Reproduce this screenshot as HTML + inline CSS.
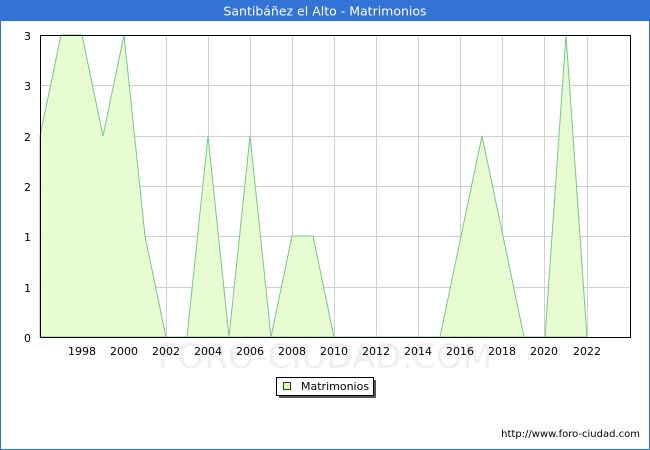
<!DOCTYPE html>
<html><head><meta charset="utf-8"><style>
body{margin:0;width:650px;height:450px;overflow:hidden;background:#fff;font-family:"DejaVu Sans","Liberation Sans",sans-serif;}
</style></head><body>
<svg width="650" height="450" xmlns="http://www.w3.org/2000/svg" style="display:block">
<rect x="0.5" y="0.5" width="649" height="449" fill="#fff" stroke="#3373d6"/>
<rect x="0" y="0" width="650" height="21" fill="#3373d6"/>
<text x="325" y="15.5" text-anchor="middle" fill="#fff" font-size="12.5" font-family="DejaVu Sans, sans-serif">Santibáñez el Alto - Matrimonios</text>
<g stroke="#d0d0d0" stroke-width="1">
<line x1="40" y1="85.5" x2="630" y2="85.5"/><line x1="40" y1="136.5" x2="630" y2="136.5"/><line x1="40" y1="186.5" x2="630" y2="186.5"/><line x1="40" y1="236.5" x2="630" y2="236.5"/><line x1="40" y1="287.5" x2="630" y2="287.5"/>
<line x1="82.5" y1="35" x2="82.5" y2="337"/><line x1="124.5" y1="35" x2="124.5" y2="337"/><line x1="166.5" y1="35" x2="166.5" y2="337"/><line x1="208.5" y1="35" x2="208.5" y2="337"/><line x1="250.5" y1="35" x2="250.5" y2="337"/><line x1="292.5" y1="35" x2="292.5" y2="337"/><line x1="334.5" y1="35" x2="334.5" y2="337"/><line x1="376.5" y1="35" x2="376.5" y2="337"/><line x1="418.5" y1="35" x2="418.5" y2="337"/><line x1="460.5" y1="35" x2="460.5" y2="337"/><line x1="502.5" y1="35" x2="502.5" y2="337"/><line x1="544.5" y1="35" x2="544.5" y2="337"/><line x1="587.5" y1="35" x2="587.5" y2="337"/>
</g>
<text x="325" y="368" text-anchor="middle" fill="#eef0f6" font-size="34" font-family="DejaVu Sans, sans-serif">FORO-CIUDAD.COM</text>
<polygon fill="#e6fccc" fill-opacity="0.9" stroke="#7cc48e" stroke-width="1" points="40,337 40,136 61,35 82,35 103,136 124,35 145,236 166,337 187,337 208,136 229,337 250,136 271,337 292,236 313,236 334,337 440,337 461,236 482,136 503,236 524,337 545,337 566,35 587,337"/>
<rect x="40.5" y="35.5" width="590" height="302" fill="none" stroke="#000"/>
<g font-size="11" fill="#000" font-family="DejaVu Sans, sans-serif">
<text x="31" y="40" text-anchor="end">3</text><text x="31" y="90" text-anchor="end">3</text><text x="31" y="141" text-anchor="end">2</text><text x="31" y="191" text-anchor="end">2</text><text x="31" y="241" text-anchor="end">1</text><text x="31" y="292" text-anchor="end">1</text><text x="31" y="342" text-anchor="end">0</text>
<g text-anchor="middle">
<text x="82" y="355">1998</text><text x="124" y="355">2000</text><text x="166" y="355">2002</text><text x="208" y="355">2004</text><text x="250" y="355">2006</text><text x="292" y="355">2008</text><text x="334" y="355">2010</text><text x="376" y="355">2012</text><text x="418" y="355">2014</text><text x="460" y="355">2016</text><text x="502" y="355">2018</text><text x="544" y="355">2020</text><text x="587" y="355">2022</text>
</g></g>
<rect x="279" y="380" width="97" height="18" fill="#555"/>
<rect x="276.5" y="377.5" width="97" height="18" fill="#fff" stroke="#000"/>
<rect x="283.5" y="382.5" width="7" height="7" fill="#d8f7b0" stroke="#333"/>
<text x="301" y="390" font-size="11" font-family="DejaVu Sans, sans-serif">Matrimonios</text>
<text x="640" y="437" text-anchor="end" font-size="10" font-family="DejaVu Sans, sans-serif">http://www.foro-ciudad.com</text>
</svg>
</body></html>
